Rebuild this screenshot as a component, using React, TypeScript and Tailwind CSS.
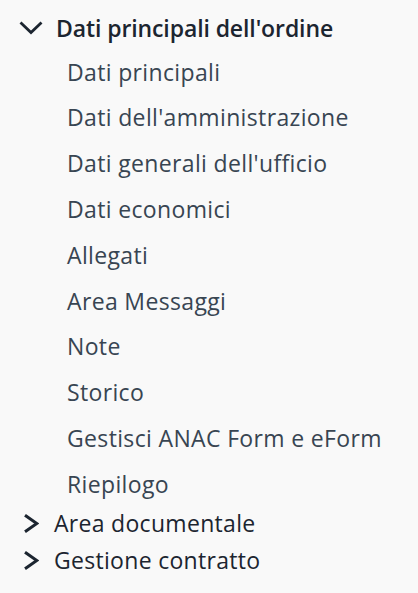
import React from "react";

const subs = [
  "Dati principali",
  "Dati dell'amministrazione",
  "Dati generali dell'ufficio",
  "Dati economici",
  "Allegati",
  "Area Messaggi",
  "Note",
  "Storico",
  "Gestisci ANAC Form e eForm",
  "Riepilogo",
];

function ChevronDown() {
  return (
    <svg width="24" height="14" viewBox="0 0 24 14" className="shrink-0">
      <polyline points="1.5,1.5 12,11.5 22.5,1.5" fill="none" stroke="#1c2530" strokeWidth="2.8" strokeLinecap="butt" strokeLinejoin="miter" />
    </svg>
  );
}

function ChevronRight() {
  return (
    <svg width="16" height="19" viewBox="0 0 16 19" className="shrink-0">
      <polyline points="2,1.2 13.8,9.5 2,17.8" fill="none" stroke="#1c2530" strokeWidth="3" strokeLinecap="butt" strokeLinejoin="miter" />
    </svg>
  );
}

export default function App() {
  return (
    <div
      className="w-[418px] h-[593px] bg-[#f9f9f9] overflow-hidden pt-[7px]"
      style={{ fontFamily: '"Open Sans", sans-serif' }}
    >
      <div className="h-[42px] flex items-center pl-[19px] gap-[13px]">
        <ChevronDown />
        <span className="text-[23px] font-semibold text-[#1c2530] tracking-[-0.1px]">
          Dati principali dell'ordine
        </span>
      </div>
      <ul>
        {subs.map((s) => (
          <li key={s} className="h-[45.8px] flex items-center pl-[67px] text-[23px] text-[#384552] tracking-[0.35px]">
            {s}
          </li>
        ))}
      </ul>
      <ul className="-mt-[2px]">
        {["Area documentale", "Gestione contratto"].map((s) => (
          <li key={s} className="h-[37px] flex items-center pl-[23px] gap-[15px] text-[23px] text-[#1c2530] tracking-[0.3px]">
            <ChevronRight />
            <span>{s}</span>
          </li>
        ))}
      </ul>
    </div>
  );
}
